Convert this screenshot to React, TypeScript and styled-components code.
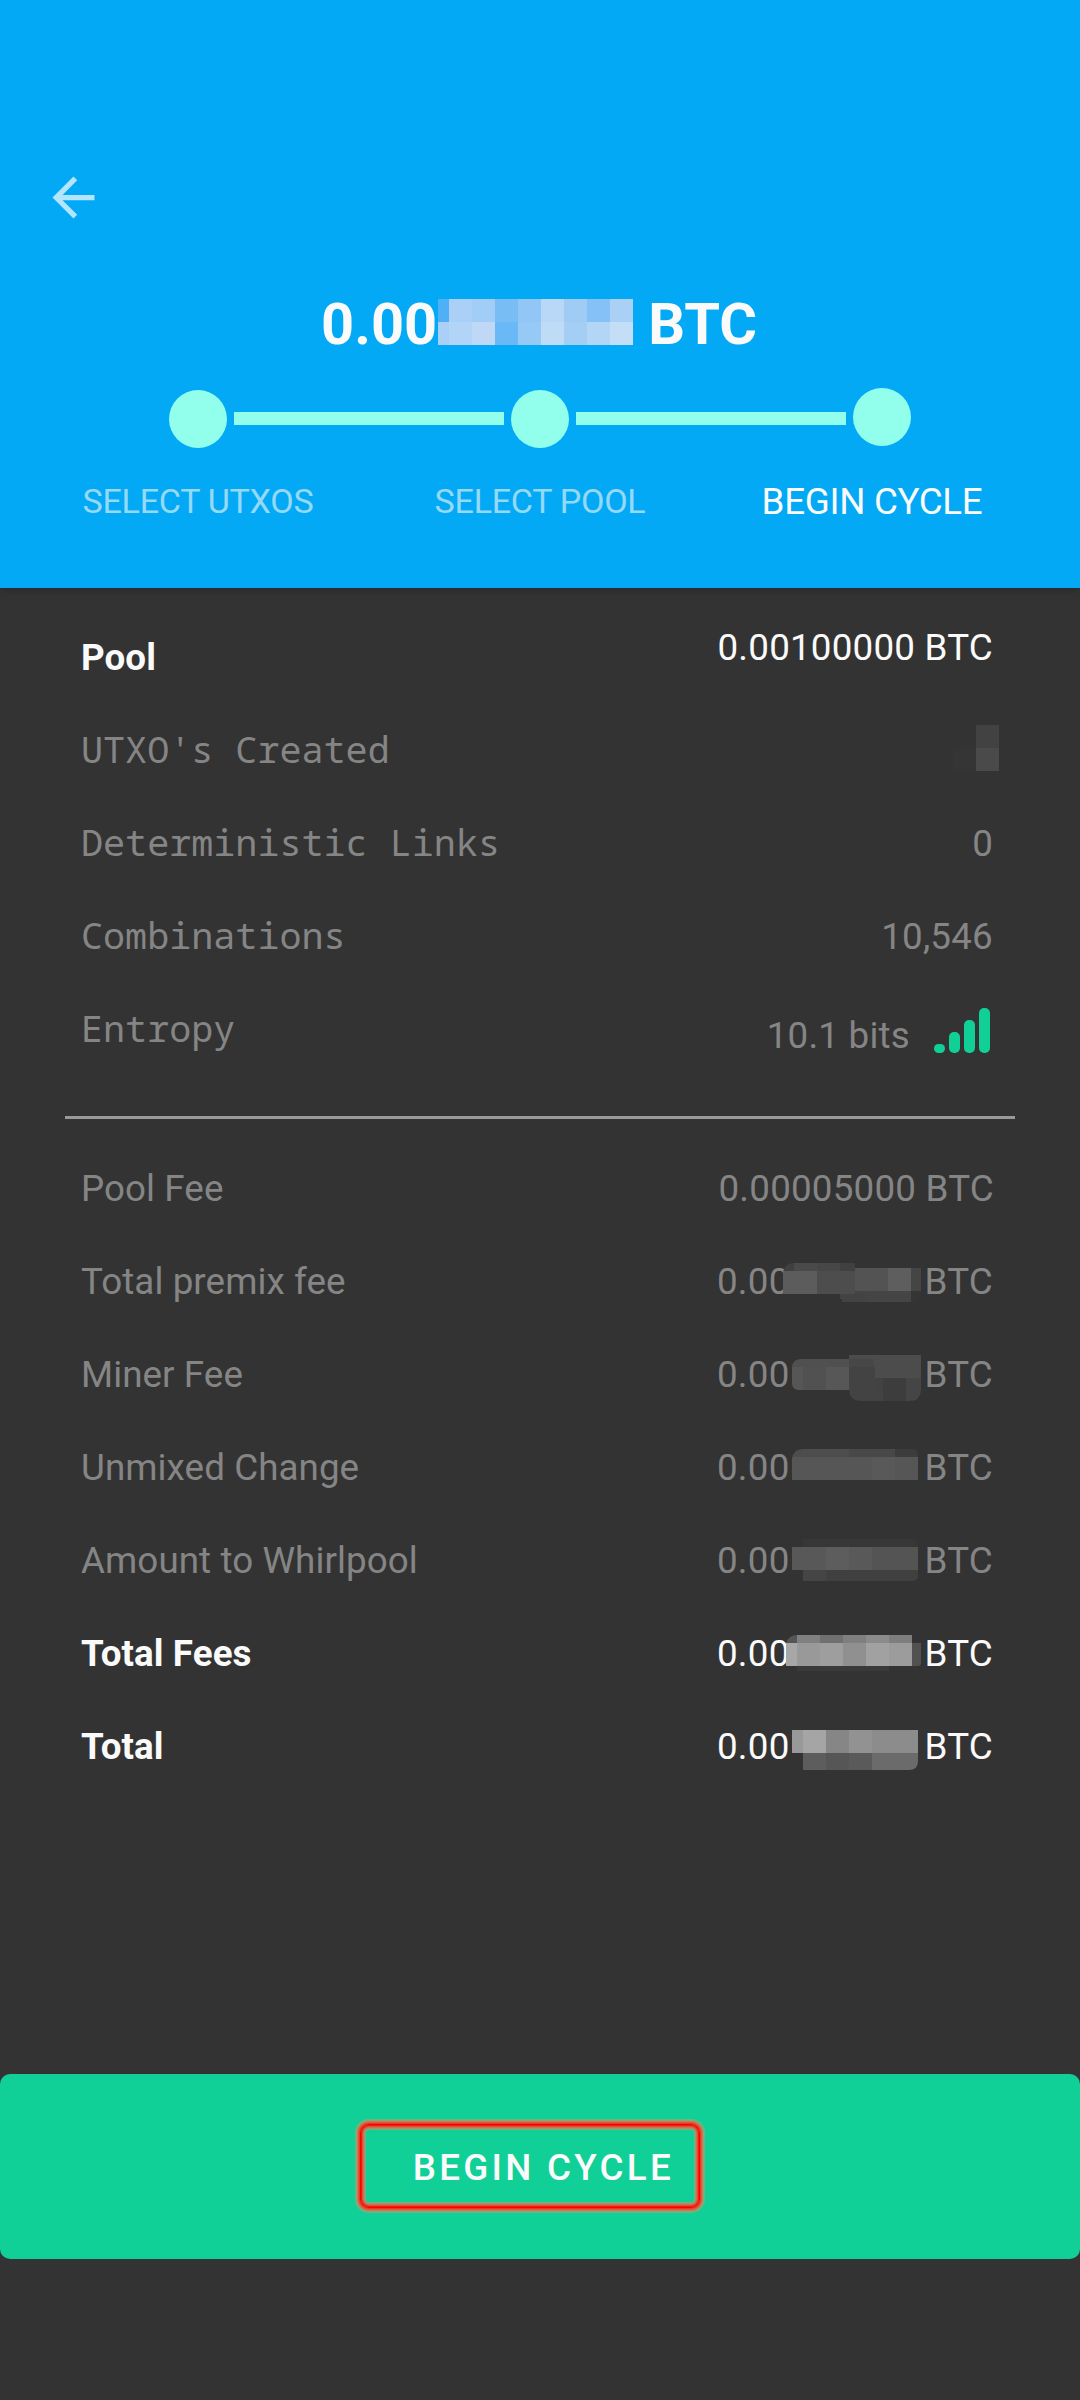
import React from "react";
import styled, { createGlobalStyle } from "styled-components";

const GlobalStyle = createGlobalStyle`
  *, *::before, *::after { box-sizing: border-box; }
  body { margin: 0; background: #333333; }
`;

const Screen = styled.main`
  display: flex;
  flex-direction: column;
  width: 1080px;
  height: 2400px;
  overflow: hidden;
  background: #333333;
  color: #858585;
  font-family: Roboto, sans-serif;
  font-size: 36.75px;
  line-height: 43px;
`;

const Header = styled.header`
  display: flex;
  flex-direction: column;
  flex: none;
  height: 588px;
  padding-top: 166px;
  background: #03a9f4;
  box-shadow: 0 1px 10px rgba(0, 0, 0, 0.28);
`;

const BackButton = styled.button`
  width: 63px;
  height: 63px;
  margin-left: 42px;
  padding: 0;
  border: 0;
  background: none;
  color: rgba(255, 255, 255, 0.7);
`;

const Balance = styled.h1`
  display: flex;
  align-items: flex-start;
  height: 68px;
  margin: 61px 0 0 321px;
  color: #fafafa;
  font-size: 57.75px;
  font-weight: 700;
  line-height: 68px;
`;

const Stepper = styled.div`
  display: flex;
  align-items: center;
  height: 60px;
  margin: 31px 0 0 169px;
`;

const StepDot = styled.span<{ $raised?: boolean }>`
  width: 58px;
  height: 58px;
  border-radius: 50%;
  background: #92ffec;
  margin-top: ${(p) => (p.$raised ? "-4px" : "0")};
`;

const StepLine = styled.span`
  width: 270px;
  height: 13px;
  margin: 0 7px 1px;
  background: #92ffec;
`;

const StepLabels = styled.div`
  display: grid;
  grid-template-columns: 342px 342px 322px;
  margin: 31px 0 0 27px;
  height: 43px;
  text-align: center;
`;

const StepLabel = styled.span<{ $active?: boolean }>`
  color: ${(p) => (p.$active ? "#fafafa" : "rgba(250, 250, 250, 0.6)")};
  font-size: ${(p) => (p.$active ? "36.75px" : "34.125px")};
  letter-spacing: -0.3px;
  white-space: nowrap;
`;

const Section = styled.section`
  display: flex;
  flex-direction: column;
  padding: 48px 87px 0 81px;
`;

const Row = styled.div`
  display: flex;
  justify-content: space-between;
  align-items: flex-start;
  height: 93px;
`;

const Label = styled.span<{ $mono?: boolean; $strong?: boolean }>`
  margin-top: ${(p) => (p.$mono ? "-1px" : "0")};
  font-family: ${(p) =>
    p.$mono ? '"Droid Sans Mono", "Noto Sans Mono", "DejaVu Sans Mono", monospace' : "inherit"};
  font-weight: ${(p) => (p.$strong ? 700 : 400)};
  color: ${(p) => (p.$strong ? "#fafafa" : "inherit")};
  letter-spacing: ${(p) => (p.$mono ? "0" : "0.08px")};
  white-space: pre;
`;

const Value = styled.span<{ $strong?: boolean; $shift?: number; $nudge?: number }>`
  display: flex;
  align-items: flex-start;
  height: 43px;
  margin-top: ${(p) => p.$shift ?? 0}px;
  margin-right: ${(p) => p.$nudge ?? 0}px;
  color: ${(p) => (p.$strong ? "#fafafa" : "inherit")};
  letter-spacing: 0.22px;
  white-space: pre;
`;

const RedactedValue = styled(Value)`
  position: relative;
  width: 276px;
  justify-content: space-between;
`;

const Mosaic = styled.svg`
  position: absolute;
  display: block;
`;

const Divider = styled.hr`
  flex: none;
  width: 950px;
  height: 3px;
  margin: 15px 0 0 65px;
  border: 0;
  background: #999999;
`;

const Bars = styled.svg`
  display: block;
  margin: -6px 3px 0 24px;
`;

const Action = styled.button`
  display: flex;
  flex: none;
  width: 1080px;
  height: 185px;
  margin-top: auto;
  margin-bottom: 141px;
  padding: 50px 0 0 360px;
  border: 0;
  border-radius: 10px;
  background: #10d098;
`;

const Highlight = styled.span`
  display: flex;
  align-items: center;
  justify-content: flex-end;
  width: 340px;
  height: 84px;
  padding: 3px 25px 0 0;
  border: 1px solid #ff0000;
  border-radius: 9px;
  box-shadow:
    0 0 0 1px #f13620, 0 0 0 2px #d55d40, 0 0 0 3px #ba825b,
    0 0 0 4px #9a9f72, 0 0 0 5px #66b884,
    inset 0 0 0 1px #f81a0f, inset 0 0 0 2px #de5038, inset 0 0 0 3px #c57452,
    inset 0 0 0 4px #a5936a, inset 0 0 0 5px #74b080;
  color: #fafafa;
  font-family: Roboto, sans-serif;
  font-size: 36.75px;
  font-weight: 500;
  letter-spacing: 3.28px;
  white-space: nowrap;
`;

/* Mosaic tiles are [x, y, width, height, fill], relative to the tile group. */
type Tile = [number, number, number, number, string];

type Patch = { left: number; top: number; w: number; h: number; clip: string; tiles: Tile[] };

const Redaction = ({ id, patch }: { id: string; patch: Patch }) => (
  <Mosaic
    width={patch.w}
    height={patch.h}
    viewBox={`0 0 ${patch.w} ${patch.h}`}
    shapeRendering="crispEdges"
    style={{ left: patch.left, top: patch.top }}
  >
    <clipPath id={id}>
      <path d={patch.clip} />
    </clipPath>
    <g clipPath={`url(#${id})`}>
      {patch.tiles.map(([x, y, w, h, fill], i) => (
        <rect key={i} x={x} y={y} width={w} height={h} fill={fill} />
      ))}
    </g>
  </Mosaic>
);

const BalanceMosaic = styled.svg`
  display: block;
  flex: none;
  margin: 9px 15px 0 1px;
`;

const balanceTop = ["#4fb0f6", "#abd0f7", "#a2cdf6", "#79bdf5", "#92c6f6", "#b9d7f6", "#9fcbf5", "#85c0f6", "#aad0f6"];
const balanceBottom = ["#abd0f7", "#b2d5f7", "#bed8f5", "#6ab8f5", "#97c9f7", "#c0dbf6", "#a5cef5", "#b3d5f6", "#c4def7"];

const patches: Record<string, Patch> = {
  premix: {
    left: 66, top: 0, w: 138, h: 42,
    clip: "M0 12Q2 3 11 3H59V1H138V32Q138 42 129 42H59V39H57V34H0Z",
    tiles: [
      [0, 3, 11, 8, "#404040"], [11, 3, 23, 8, "#4a4a4a"], [34, 3, 23, 8, "#474747"], [57, 3, 15, 8, "#404040"],
      [0, 11, 34, 23, "#5c5c5c"], [34, 11, 38, 23, "#4d4d4d"],
      [72, 8, 33, 23, "#535353"], [105, 8, 23, 23, "#5e5e5e"], [128, 8, 10, 23, "#454545"],
      [57, 34, 15, 8, "#434343"], [72, 31, 10, 11, "#434343"], [82, 31, 46, 11, "#454545"], [128, 31, 10, 11, "#353535"],
    ],
  },
  miner: {
    left: 75, top: 2, w: 129, h: 46,
    clip: "M0 12Q1 4 9 4H57V0H129V36Q128 46 118 46H68Q58 46 57 35H6Q0 34 0 28Z",
    tiles: [
      [0, 4, 57, 8, "#505050"], [0, 12, 11, 23, "#565656"], [11, 12, 23, 23, "#515151"], [34, 12, 23, 23, "#575757"],
      [57, 0, 72, 23, "#4c4c4c"], [57, 4, 25, 8, "#474747"], [57, 12, 26, 23, "#434343"],
      [83, 23, 8, 12, "#424242"], [57, 35, 34, 11, "#434343"], [91, 23, 23, 23, "#3d3d3d"], [114, 23, 15, 23, "#454545"],
    ],
  },
  unmixed: {
    left: 75, top: 1, w: 126, h: 40,
    clip: "M0 12Q1 2 11 2H120Q126 2 126 8V33H0Z",
    tiles: [
      [0, 2, 57, 8, "#4d4d4d"], [57, 2, 46, 8, "#484848"], [103, 2, 23, 8, "#3c3c3c"],
      [0, 10, 80, 23, "#565656"], [80, 10, 23, 23, "#595959"], [103, 10, 23, 23, "#565656"],
    ],
  },
  whirlpool: {
    left: 75, top: -2, w: 126, h: 44,
    clip: "M0 10H11V2H120Q126 2 126 8V38Q126 44 120 44H11V33H0Z",
    tiles: [
      [11, 2, 115, 8, "#373737"], [0, 10, 34, 23, "#585858"], [34, 10, 23, 23, "#5d5d5d"], [57, 10, 23, 23, "#595959"],
      [80, 10, 46, 23, "#545454"], [11, 33, 23, 11, "#454545"], [34, 33, 92, 11, "#404040"],
    ],
  },
  fees: {
    left: 69, top: 3, w: 135, h: 38,
    clip: "M0 8Q3 0 11 0H126V8H135V28Q135 31 132 31H126V36H11V31H0Z",
    tiles: [
      [0, 0, 11, 8, "#555555"], [11, 0, 23, 8, "#808080"], [34, 0, 23, 8, "#707070"], [57, 0, 23, 8, "#7f7f7f"],
      [80, 0, 23, 8, "#8b8b8b"], [103, 0, 23, 8, "#7e7e7e"],
      [0, 8, 11, 23, "#a7a7a7"], [11, 8, 23, 23, "#999999"], [34, 8, 23, 23, "#9e9e9e"], [57, 8, 23, 23, "#909090"],
      [80, 8, 23, 23, "#a1a1a1"], [103, 8, 23, 23, "#9c9c9c"], [126, 8, 9, 23, "#515151"], [11, 31, 92, 5, "#3a3a3a"],
    ],
  },
  total: {
    left: 75, top: 5, w: 126, h: 40,
    clip: "M0 0H126V31Q126 40 117 40H11V23H0Z",
    tiles: [
      [0, 0, 11, 23, "#999999"], [11, 0, 23, 23, "#a5a5a5"], [34, 0, 23, 23, "#868686"], [57, 0, 23, 23, "#929292"],
      [80, 0, 46, 23, "#8c8c8c"], [11, 23, 23, 17, "#5d5d5d"], [34, 23, 23, 17, "#565656"], [57, 23, 23, 17, "#5a5a5a"],
      [80, 23, 46, 17, "#6b6b6b"],
    ],
  },
  utxos: {
    left: 0, top: 0, w: 46, h: 46,
    clip: "M0 0H46V46H0Z",
    tiles: [[0, 23, 23, 23, "#353535"], [23, 0, 23, 23, "#424242"], [23, 23, 23, 23, "#4a4a4a"]],
  },
};

const UtxoCount = styled.span`
  position: relative;
  width: 46px;
  height: 46px;
  margin: -4px -6px 0 0;
`;

const fees: { label: string; patch: string; strong?: boolean }[] = [
  { label: "Total premix fee", patch: "premix" },
  { label: "Miner Fee", patch: "miner" },
  { label: "Unmixed Change", patch: "unmixed" },
  { label: "Amount to Whirlpool", patch: "whirlpool" },
  { label: "Total Fees", patch: "fees", strong: true },
  { label: "Total", patch: "total", strong: true },
];

export default function App() {
  return (
    <Screen>
      <GlobalStyle />
      <Header>
        <BackButton aria-label="Back">
          <svg width="63" height="63" viewBox="0 0 24 24" fill="currentColor">
            <path d="M20 11H7.83l5.59-5.59L12 4l-8 8 8 8 1.41-1.41L7.83 13H20v-2z" />
          </svg>
        </BackButton>
        <Balance>
          0.00
          <BalanceMosaic width="195" height="46" shapeRendering="crispEdges">
            {[balanceTop, balanceBottom].map((colors, row) =>
              colors.map((fill, i) => (
                <rect
                  key={`${row}-${i}`}
                  x={i === 0 ? 0 : 11 + (i - 1) * 23}
                  y={row * 23}
                  width={i === 0 ? 11 : 23}
                  height={23}
                  fill={fill}
                />
              )),
            )}
          </BalanceMosaic>
          BTC
        </Balance>
        <Stepper>
          <StepDot />
          <StepLine />
          <StepDot />
          <StepLine />
          <StepDot $raised />
        </Stepper>
        <StepLabels>
          <StepLabel>SELECT UTXOS</StepLabel>
          <StepLabel>SELECT POOL</StepLabel>
          <StepLabel $active>BEGIN CYCLE</StepLabel>
        </StepLabels>
      </Header>

      <Section>
        <Row>
          <Label $strong>Pool</Label>
          <Value $strong $shift={-10}>0.00100000 BTC</Value>
        </Row>
        <Row>
          <Label $mono>UTXO's Created</Label>
          <UtxoCount>
            <Redaction id="utxos" patch={patches.utxos} />
          </UtxoCount>
        </Row>
        <Row>
          <Label $mono>Deterministic Links</Label>
          <Value>0</Value>
        </Row>
        <Row>
          <Label $mono>Combinations</Label>
          <Value>10,546</Value>
        </Row>
        <Row>
          <Label $mono>Entropy</Label>
          <Value $shift={6}>
            10.1 bits
            <Bars width="56" height="45" fill="#10d098">
              <rect x="0" y="36" width="11" height="9" rx="4.5" />
              <rect x="15" y="24" width="11" height="21" rx="5" />
              <rect x="30" y="12" width="11" height="33" rx="5" />
              <rect x="45" y="0" width="11" height="45" rx="5" />
            </Bars>
          </Value>
        </Row>
      </Section>
      <Divider />
      <Section>
        <Row>
          <Label>Pool Fee</Label>
          <Value $nudge={-1}>0.00005000 BTC</Value>
        </Row>
        {fees.map(({ label, patch, strong }) => (
          <Row key={label}>
            <Label $strong={strong}>{label}</Label>
            <RedactedValue $strong={strong}>
              <span>0.00</span>
              <Redaction id={patch} patch={patches[patch]} />
              <span>BTC</span>
            </RedactedValue>
          </Row>
        ))}
      </Section>
      <Action>
        <Highlight>BEGIN CYCLE</Highlight>
      </Action>
    </Screen>
  );
}
